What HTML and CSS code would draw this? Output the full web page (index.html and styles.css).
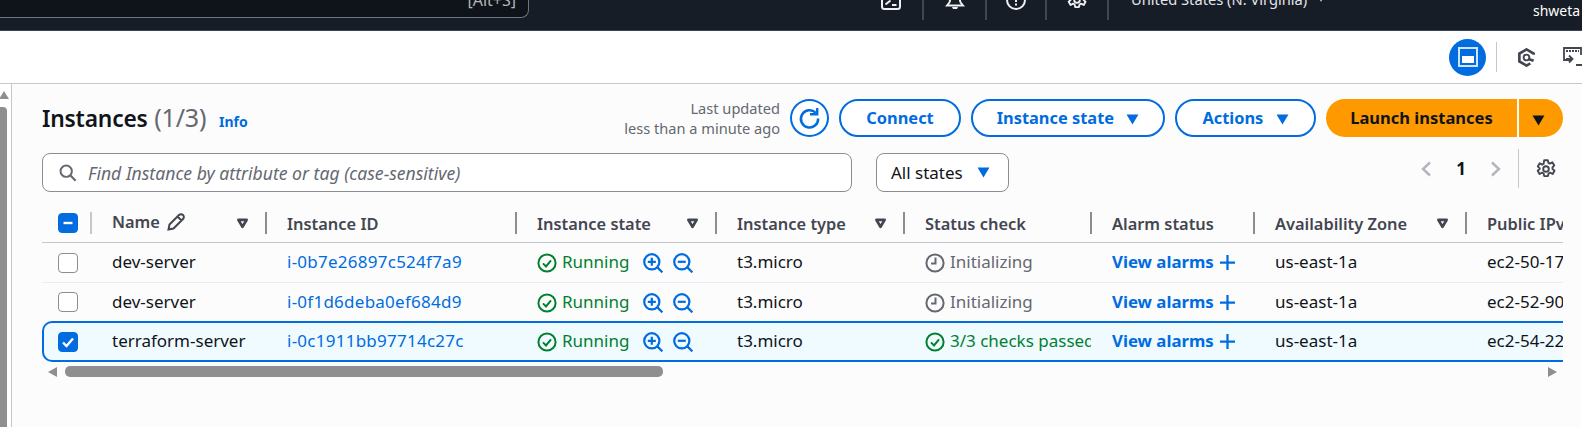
FILE: index.html
```html
<!DOCTYPE html>
<html>
<head>
  <title>Instances</title>
  <link rel="stylesheet" href="styles.css">
</head>
<body>

  <svg class="sprites" width="0" height="0">
    <symbol id="i-check" viewBox="0 0 20 20"><circle cx="10" cy="10" r="8.6" fill="none" stroke="currentColor" stroke-width="2"/><path d="M6 10.400l3 3 5-6" fill="none" stroke="currentColor" stroke-width="2"/></symbol>
    <symbol id="i-clock" viewBox="0 0 20 20"><circle cx="10" cy="10" r="8.6" fill="none" stroke="currentColor" stroke-width="2"/><path d="M10.500 4.500v6h-4.500" fill="none" stroke="currentColor" stroke-width="2"/></symbol>
    <symbol id="i-zoom-in" viewBox="0 0 20 20"><circle cx="8.800" cy="8.800" r="7.600" fill="none" stroke="currentColor" stroke-width="2.200"/><path d="M14.400 14.400l5 5" stroke="currentColor" stroke-width="2.200"/><path d="M4.800 8.800h8M8.800 4.800v8" stroke="currentColor" stroke-width="2.200"/></symbol>
    <symbol id="i-zoom-out" viewBox="0 0 20 20"><circle cx="8.800" cy="8.800" r="7.600" fill="none" stroke="currentColor" stroke-width="2.200"/><path d="M14.400 14.400l5 5" stroke="currentColor" stroke-width="2.200"/><path d="M4.800 8.800h8" stroke="currentColor" stroke-width="2.200"/></symbol>
    <symbol id="i-plus" viewBox="0 0 16 16"><path d="M0 8h16M8 0v16" stroke="currentColor" stroke-width="2.400"/></symbol>
    <symbol id="i-sort" viewBox="0 0 14 12"><path d="M2.500 2h9l-4.500 7.500z" fill="none" stroke="currentColor" stroke-width="3" stroke-linejoin="round"/></symbol>
    <symbol id="i-caret" viewBox="0 0 14 12"><path d="M0.500 0.500h13l-6.500 11z" fill="currentColor"/></symbol>
    <symbol id="i-gear" viewBox="0 0 20 20"><path d="M8.200 1.200h3.600l.6 2.600 1.500.8 2.400-1.300 2 3.100-1.800 1.900v1.600l2 1.900-1.800 3.200-2.600-1.300-1.500.8-.7 2.600H8.200l-.6-2.600-1.500-.8-2.500 1.300-1.900-3.200 2-1.900V9.300L1.800 7.400l1.900-3.100 2.500 1.300 1.400-.8z" fill="none" stroke="currentColor" stroke-width="1.900" stroke-linejoin="round"/><circle cx="10" cy="10" r="2.800" fill="none" stroke="currentColor" stroke-width="1.900"/></symbol>
  </svg>

  <div class="topbar">
    <div class="search-global"><span>[Alt+S]</span></div>
    <div class="nav-icons">
      <div class="nav-item nav-terminal">
        <svg class="nav-icon" viewBox="0 0 20 20"><rect x="1" y="1" width="18" height="18" rx="2.500" fill="none" stroke="currentColor" stroke-width="2"/><path d="M4.500 14.500l5-4M11 15h4.500" fill="none" stroke="currentColor" stroke-width="2"/></svg>
      </div>
      <div class="nav-item nav-bell">
        <svg class="nav-icon" viewBox="0 0 20 20"><path d="M4 13c1.500-2 1-4 1.500-6C6 4 8 2.500 10 2.500S14 4 14.500 7c.5 2 0 4 1.500 6l2 2.500H2z" fill="none" stroke="currentColor" stroke-width="2"/><path d="M7 17h6l-1 2H8z" fill="currentColor"/></svg>
      </div>
      <div class="nav-item nav-help">
        <svg class="nav-icon" viewBox="0 0 20 20"><circle cx="10" cy="10" r="9" fill="none" stroke="currentColor" stroke-width="2"/><path d="M10 6v6M10 13.500v2" stroke="currentColor" stroke-width="2"/></svg>
      </div>
      <div class="nav-item nav-gear">
        <svg class="nav-icon"><use href="#i-gear"/></svg>
      </div>
      <div class="nav-region">United States (N. Virginia) <svg class="nav-caret"><use href="#i-caret"/></svg></div>
      <div class="nav-user">shweta</div>
    </div>
  </div>

  <div class="toolbar">
    <button class="panel-btn">
      <svg width="20" height="20" viewBox="0 0 20 20"><rect x="1" y="1" width="18" height="18" fill="none" stroke="#cfe4fb" stroke-width="2"/><rect x="4" y="9" width="12" height="7" fill="#fff"/></svg>
    </button>
    <span class="toolbar-sep"></span>
    <svg class="tool-icon tool-hex" viewBox="0 0 20 20"><path d="M17.500 7V5.800L10 1.500 2.500 5.800v8.400l7.500 4.300 4-2.300" fill="none" stroke="currentColor" stroke-width="2.800"/><circle cx="10" cy="10" r="3" fill="none" stroke="currentColor" stroke-width="2"/><path d="M12 11.500l5.500 2" stroke="currentColor" stroke-width="2.800"/></svg>
    <svg class="tool-icon tool-term" viewBox="0 0 20 20"><path d="M7 13H1V1h17v7" fill="none" stroke="currentColor" stroke-width="1.800"/><path d="M3 4h13" stroke="currentColor" stroke-width="2" stroke-dasharray="2 1"/><path d="M3 12h6M6 8.500l3.500 3.500L6 15.500M13 18h7" fill="none" stroke="currentColor" stroke-width="1.800"/></svg>
  </div>

  <div class="main">
    <div class="page-scroll">
      <span class="page-scroll-up"></span>
      <span class="page-scroll-thumb"></span>
    </div>

    <div class="content">
      <div class="header">
        <h1>Instances <span class="count">(1/3)</span> <a class="info">Info</a></h1>
        <div class="actions">
          <div class="updated">Last updated<br>less than a minute ago</div>
          <button class="btn btn-round">
            <svg width="23" height="23" viewBox="0 0 24 24"><path d="M18.500 6.200A9 9 0 1 0 21 12" fill="none" stroke="currentColor" stroke-width="2.600"/><path d="M12.500 7.500h7.500V1" fill="none" stroke="currentColor" stroke-width="2.600"/></svg>
          </button>
          <button class="btn btn-connect">Connect</button>
          <button class="btn btn-state">Instance state <svg class="caret"><use href="#i-caret"/></svg></button>
          <button class="btn btn-actions">Actions <svg class="caret"><use href="#i-caret"/></svg></button>
          <div class="launch">
            <button class="launch-main">Launch instances</button>
            <button class="launch-split"><svg class="caret"><use href="#i-caret"/></svg></button>
          </div>
        </div>
      </div>

      <div class="filters">
        <div class="search">
          <svg class="search-icon" viewBox="0 0 20 20"><circle cx="8" cy="8" r="6.300" fill="none" stroke="currentColor" stroke-width="2.200"/><path d="M12.500 12.500l6 6" stroke="currentColor" stroke-width="2.400"/></svg>
          <span>Find Instance by attribute or tag (case-sensitive)</span>
        </div>
        <div class="state-select">All states <svg class="caret"><use href="#i-caret"/></svg></div>
        <div class="pager">
          <svg class="chev" viewBox="0 0 12 16"><path d="M10 1.500L3 8l7 6.500" fill="none" stroke="currentColor" stroke-width="2.400"/></svg>
          <strong>1</strong>
          <svg class="chev" viewBox="0 0 12 16"><path d="M2 1.500L9 8l-7 6.500" fill="none" stroke="currentColor" stroke-width="2.400"/></svg>
          <span class="pager-sep"></span>
          <svg class="pager-gear"><use href="#i-gear"/></svg>
        </div>
      </div>

      <div class="table-wrap">
        <table>
          <colgroup>
            <col class="c-check"><col class="c-name"><col class="c-id"><col class="c-state"><col class="c-type"><col class="c-status"><col class="c-alarm"><col class="c-zone"><col class="c-dns">
          </colgroup>
          <thead>
            <tr>
              <th class="cell-check"><span class="box box-on"><svg width="14" height="14" viewBox="0 0 14 14"><path d="M2.500 7h9" stroke="#fff" stroke-width="2.400"/></svg></span><i class="sep sep-light"></i></th>
              <th><span class="name-head">Name <svg class="pencil" viewBox="0 0 18 18"><path d="M1.500 16.500l1-5L12 2a2.500 2.500 0 0 1 4 4l-9.500 9.500zM10.500 3.500l4 4" fill="none" stroke="currentColor" stroke-width="2"/></svg></span><svg class="sort"><use href="#i-sort"/></svg><i class="sep"></i></th>
              <th>Instance ID<i class="sep"></i></th>
              <th>Instance state<svg class="sort"><use href="#i-sort"/></svg><i class="sep"></i></th>
              <th>Instance type<svg class="sort"><use href="#i-sort"/></svg><i class="sep"></i></th>
              <th>Status check<i class="sep"></i></th>
              <th>Alarm status<i class="sep"></i></th>
              <th>Availability Zone<svg class="sort"><use href="#i-sort"/></svg><i class="sep"></i></th>
              <th>Public IPv4 DNS</th>
            </tr>
          </thead>
          <tbody>
            <tr>
              <td class="cell-check"><span class="box"></span></td>
              <td>dev-server</td>
              <td><a class="id-link">i-0b7e26897c524f7a9</a></td>
              <td><span class="running"><svg class="ico"><use href="#i-check"/></svg>Running</span><span class="zooms"><svg class="ico"><use href="#i-zoom-in"/></svg><svg class="ico"><use href="#i-zoom-out"/></svg></span></td>
              <td>t3.micro</td>
              <td><div class="clip muted"><svg class="ico"><use href="#i-clock"/></svg>Initializing</div></td>
              <td><a class="alarms">View alarms <svg class="plus"><use href="#i-plus"/></svg></a></td>
              <td>us-east-1a</td>
              <td>ec2-50-17-0-0.compute-1.amazonaws.com</td>
            </tr>
            <tr>
              <td class="cell-check"><span class="box"></span></td>
              <td>dev-server</td>
              <td><a class="id-link">i-0f1d6deba0ef684d9</a></td>
              <td><span class="running"><svg class="ico"><use href="#i-check"/></svg>Running</span><span class="zooms"><svg class="ico"><use href="#i-zoom-in"/></svg><svg class="ico"><use href="#i-zoom-out"/></svg></span></td>
              <td>t3.micro</td>
              <td><div class="clip muted"><svg class="ico"><use href="#i-clock"/></svg>Initializing</div></td>
              <td><a class="alarms">View alarms <svg class="plus"><use href="#i-plus"/></svg></a></td>
              <td>us-east-1a</td>
              <td>ec2-52-90-0-0.compute-1.amazonaws.com</td>
            </tr>
            <tr class="selected">
              <td class="cell-check"><span class="box box-on"><svg width="14" height="14" viewBox="0 0 14 14"><path d="M2 7.500l3.500 3.500L12 3.500" fill="none" stroke="#fff" stroke-width="2.400"/></svg></span></td>
              <td>terraform-server</td>
              <td><a class="id-link">i-0c1911bb97714c27c</a></td>
              <td><span class="running"><svg class="ico"><use href="#i-check"/></svg>Running</span><span class="zooms"><svg class="ico"><use href="#i-zoom-in"/></svg><svg class="ico"><use href="#i-zoom-out"/></svg></span></td>
              <td>t3.micro</td>
              <td><div class="clip passed"><svg class="ico"><use href="#i-check"/></svg>3/3 checks passed</div></td>
              <td><a class="alarms">View alarms <svg class="plus"><use href="#i-plus"/></svg></a></td>
              <td>us-east-1a</td>
              <td>ec2-54-22-0-0.compute-1.amazonaws.com</td>
            </tr>
          </tbody>
        </table>
      </div>

      <div class="hscroll">
        <span class="arrow-left"></span>
        <span class="hscroll-thumb"></span>
        <span class="arrow-right"></span>
      </div>
    </div>
  </div>

</body>
</html>
```

FILE: styles.css
```css
* {
  box-sizing: border-box;
}

html, body {
  height: 100%;
}

body {
  margin: 0;
  display: flex;
  flex-direction: column;
  overflow: hidden;
  font-family: "Noto Sans", sans-serif;
  font-size: 17px;
  color: #0f141a;
  background: #fcfcfc;
}

button {
  font-family: inherit;
  cursor: pointer;
}

.sprites {
  position: absolute;
}

/* top nav */
.topbar {
  flex: 0 0 31px;
  display: flex;
  background: #161d26;
  border-bottom: 1px solid #3f4450;
  color: #fff;
  overflow: hidden;
}

.search-global {
  flex: 0 0 529px;
  height: 18px;
  display: flex;
  justify-content: flex-end;
  align-items: flex-start;
  padding-right: 12px;
  background: #0f141a;
  border: 1px solid #6f7480;
  border-width: 0 1px 1px 0;
  border-radius: 0 0 8px 0;
  color: #b4b4bb;
  font-size: 16px;
}

.search-global span {
  margin-top: -10px;
  line-height: 20px;
}

.nav-icons {
  display: flex;
  height: 20px;
  margin-left: 331px;
}

.nav-item {
  flex: none;
  display: flex;
  justify-content: center;
  align-items: flex-end;
  height: 20px;
  border-right: 2px solid #424650;
}

.nav-terminal { width: 64px; }
.nav-bell { width: 63px; }
.nav-help { width: 60px; }
.nav-gear { width: 62px; }

.nav-icon {
  width: 20px;
  height: 20px;
  margin-bottom: 10px;
  color: #f0f0f2;
}

.nav-region {
  flex: 0 0 424px;
  padding-left: 22px;
  margin-top: -11px;
  font-size: 14.700px;
  line-height: 20px;
  color: #e4e4e8;
  white-space: nowrap;
}

.nav-caret {
  width: 8px;
  height: 7px;
  margin: 0 0 3px 6px;
}

.nav-user {
  flex: none;
  padding-top: 1px;
  font-size: 14px;
  line-height: 20px;
  white-space: nowrap;
}

/* tools row */
.toolbar {
  flex: 0 0 53px;
  display: flex;
  align-items: center;
  background: #fff;
  border-bottom: 1px solid #c6c6cd;
  padding-left: 1449px;
  overflow: hidden;
}

.panel-btn {
  flex: none;
  width: 37px;
  height: 37px;
  display: flex;
  align-items: center;
  justify-content: center;
  padding: 0;
  border: none;
  border-radius: 50%;
  background: #006ce0;
}

.toolbar-sep {
  flex: none;
  width: 1px;
  height: 30px;
  margin: 0 20px 0 10px;
  background: #c6c6cd;
}

.tool-icon {
  flex: none;
  width: 19px;
  height: 19px;
  color: #424650;
}

.tool-term {
  margin-left: 27px;
  width: 20px;
  height: 20px;
}

/* page */
.main {
  flex: 1;
  display: flex;
  min-height: 0;
  overflow: hidden;
}

.page-scroll {
  flex: 0 0 12px;
  display: flex;
  flex-direction: column;
  padding-top: 7px;
  border-right: 1px solid #c6c6cd;
  background: #fff;
}

.page-scroll-up {
  display: block;
  width: 0;
  margin-left: -1px;
  border-left: 5px solid transparent;
  border-right: 5px solid transparent;
  border-bottom: 8px solid #8f8f8f;
}

.page-scroll-thumb {
  flex: 1;
  display: block;
  width: 7px;
  margin-top: 8px;
  border-radius: 0 4px 0 0;
  background: #8f8f8f;
}

.content {
  flex: 1;
  min-width: 0;
  padding: 15px 19px 0 30px;
}

.header {
  display: flex;
  justify-content: space-between;
  align-items: center;
  height: 38px;
}

h1 {
  margin: 0;
  padding-top: 2px;
  font-size: 22.800px;
  font-weight: 600;
  line-height: 38px;
  letter-spacing: -0.2px;
}

.count {
  margin-left: 1px;
  font-size: 25px;
  font-weight: 400;
  color: #656871;
}

.info {
  margin-left: 7px;
  font-size: 14px;
  font-weight: 700;
  letter-spacing: 0;
  color: #006ce0;
}

.actions {
  display: flex;
  align-items: center;
  gap: 10px;
}

.updated {
  text-align: right;
  font-size: 14.600px;
  line-height: 20px;
  color: #656871;
}

.btn {
  height: 38px;
  padding: 0 0 2px;
  background: #fff;
  border: 2px solid #006ce0;
  border-radius: 19px;
  color: #006ce0;
  font-size: 16.400px;
  font-weight: 700;
}

.btn-round {
  width: 39px;
  display: flex;
  align-items: center;
  justify-content: center;
  padding: 0;
  border-radius: 50%;
}

.btn-connect {
  width: 122px;
}

.btn-state {
  width: 194px;
}

.btn-actions {
  width: 141px;
}

.caret {
  width: 13px;
  height: 11px;
  margin-left: 8px;
  color: #006ce0;
  vertical-align: -1px;
}

.launch {
  display: flex;
  gap: 2px;
}

.launch-main,
.launch-split {
  height: 38px;
  border: none;
  background: #ff9900;
  color: #0f141a;
  font-size: 16.500px;
  font-weight: 700;
}

.launch-main {
  width: 191px;
  padding: 0 0 2px;
  border-radius: 19px 0 0 19px;
}

.launch-split {
  width: 44px;
  padding: 0 6px 0 0;
  border-radius: 0 19px 19px 0;
}

.launch-split .caret {
  margin: 0;
  color: #0f141a;
}

.filters {
  display: flex;
  align-items: flex-start;
  margin-top: 16px;
}

.search {
  flex: 0 0 810px;
  height: 39px;
  display: flex;
  align-items: center;
  padding-left: 16px;
  background: #fff;
  border: 1px solid #8c8c94;
  border-radius: 8px;
  color: #656871;
  font-size: 17.600px;
  font-style: italic;
}

.search-icon {
  width: 18px;
  height: 18px;
  margin-right: 11px;
  color: #656871;
}

.state-select {
  flex: 0 0 133px;
  height: 39px;
  display: flex;
  align-items: center;
  margin-left: 24px;
  padding-left: 14px;
  background: #fff;
  border: 1px solid #8c8c94;
  border-radius: 8px;
}

.state-select .caret {
  margin-left: 14px;
}

.pager {
  display: flex;
  align-items: center;
  height: 39px;
  margin-left: 411px;
  margin-top: -4px;
  color: #b4b4bb;
}

.pager strong {
  width: 58px;
  text-align: center;
  color: #0f141a;
}

.chev {
  width: 12px;
  height: 16px;
}

.pager-sep {
  width: 1px;
  height: 39px;
  margin: 0 17px 0 16px;
  background: #c6c6cd;
}

.pager-gear {
  width: 20px;
  height: 20px;
  color: #424650;
}

/* table */
.table-wrap {
  margin-top: 16px;
  overflow: hidden;
}

table {
  table-layout: fixed;
  width: 1740px;
  border-collapse: separate;
  border-spacing: 0;
}

.c-check { width: 50px; }
.c-name { width: 175px; }
.c-id { width: 250px; }
.c-state { width: 200px; }
.c-type { width: 188px; }
.c-status { width: 187px; }
.c-alarm { width: 163px; }
.c-zone { width: 212px; }
.c-dns { width: 315px; }

th, td {
  padding: 0 0 0 20px;
  text-align: left;
  white-space: nowrap;
  overflow: hidden;
}

th {
  position: relative;
  height: 35px;
  padding-bottom: 4px;
  border-bottom: 1px solid #c6c6cd;
  font-size: 16.400px;
  font-weight: 600;
  color: #424650;
}

td {
  height: 40px;
  padding-bottom: 2px;
  border-bottom: 1px solid #ebebf0;
}

tbody tr:nth-child(2) td {
  border-bottom: none;
  height: 38px;
}

.cell-check {
  padding-left: 16px;
}

td.cell-check {
  padding-bottom: 0;
}

.sep {
  position: absolute;
  top: 4px;
  right: 0;
  width: 2px;
  height: 22px;
  background: #8c8c94;
}

.sep-light {
  background: #c6c6cd;
}

.sort {
  position: absolute;
  top: 10px;
  right: 18px;
  width: 13px;
  height: 11px;
  color: #424650;
}

.name-head {
  position: relative;
  top: -2px;
}

.pencil {
  width: 18px;
  height: 18px;
  margin-left: 3px;
  vertical-align: -3px;
  color: #424650;
}

.box {
  display: flex;
  align-items: center;
  justify-content: center;
  width: 20px;
  height: 20px;
  background: #fff;
  border: 1px solid #8c8c94;
  border-radius: 4px;
}

.box-on {
  background: #006ce0;
  border-color: #006ce0;
}

td a {
  color: #006ce0;
}

.id-link {
  letter-spacing: 0.25px;
}

.ico {
  flex: none;
  width: 20px;
  height: 20px;
  vertical-align: -5px;
}

.running {
  color: #00802f;
}

.running .ico,
.clip .ico {
  margin-right: 5px;
}

.zooms {
  margin-left: 14px;
  color: #006ce0;
}

.zooms .ico {
  margin-right: 10px;
}

.clip {
  overflow: hidden;
  width: 166px;
}

.muted {
  color: #656871;
}

.passed {
  color: #00802f;
}

.alarms {
  font-size: 16.800px;
  font-weight: 700;
}

.plus {
  width: 15px;
  height: 15px;
  margin-left: 2px;
  vertical-align: -2px;
}

.selected td {
  height: 41px;
  background: #f0fbff;
  border-top: 2px solid #006ce0;
  border-bottom: 2px solid #006ce0;
}

.selected td:first-child {
  border-left: 2px solid #006ce0;
  border-radius: 10px 0 0 10px;
  padding-left: 14px;
}

/* table scrollbar */
.hscroll {
  display: flex;
  align-items: center;
  height: 11px;
  margin-top: 4px;
  padding: 0 6px;
}

.arrow-left {
  width: 0;
  border-top: 5.500px solid transparent;
  border-bottom: 5.500px solid transparent;
  border-right: 9px solid #8f8f8f;
}

.hscroll-thumb {
  width: 598px;
  height: 11px;
  margin-left: 8px;
  border-radius: 5px;
  background: #8f8f8f;
}

.arrow-right {
  width: 0;
  margin-left: auto;
  border-top: 5.500px solid transparent;
  border-bottom: 5.500px solid transparent;
  border-left: 9px solid #8f8f8f;
}
```
